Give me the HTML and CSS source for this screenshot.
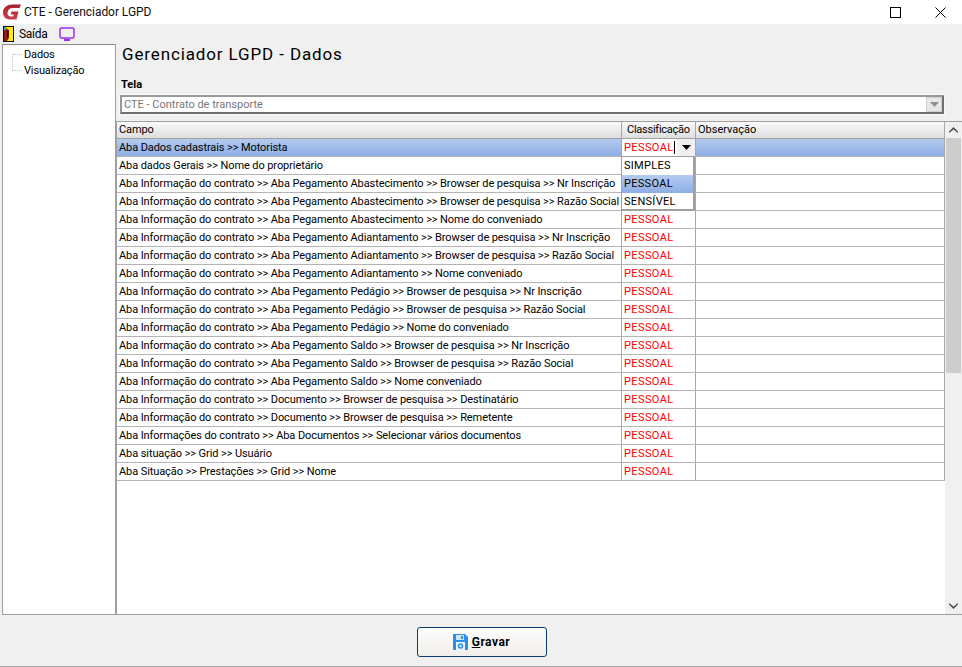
FILE: index.html
```html
<!DOCTYPE html>
<html lang="pt-BR">
<head>
<meta charset="utf-8">
<title>CTE - Gerenciador LGPD</title>
<link rel="stylesheet" href="styles.css">
</head>
<body>
<div class="window">
  <header class="titlebar">
    <svg class="app-logo" width="18" height="16" viewBox="0 0 18 16"><defs><linearGradient id="lg" x1="0" y1="0" x2="0" y2="1"><stop offset="0" stop-color="#a81e2a"/><stop offset="1" stop-color="#c9444c"/></linearGradient></defs><path d="M18 .500H9.500C4 .500 0 3.700 0 8.500 0 13 3 15.500 7.500 15.500h6L15.500 7.500H8.500L7.700 10.500h3l-.5 2H8c-2.300 0-3.700-1.500-3.500-3.800C4.800 5.700 7 4 9.500 4H16.500z" fill="url(#lg)"/></svg>
    <span class="title-text">CTE - Gerenciador LGPD</span>
    <div class="win-controls">
      <svg class="win-max" width="11" height="11" viewBox="0 0 11 11"><rect x=".5" y=".5" width="10" height="10" fill="none" stroke="#000"/></svg>
      <svg class="win-close" width="11" height="11" viewBox="0 0 11 11"><path d="M.5.500l10 10M10.500.500l-10 10" stroke="#000" fill="none"/></svg>
    </div>
  </header>
  <nav class="toolbar">
    <svg class="ico-exit" width="11" height="16" viewBox="0 0 11 16"><rect width="11" height="16" fill="#1a0a0a"/><rect x="1" y="1" width="9" height="14" fill="#ffee00"/><path d="M1 1h2v1l3 2v8l-2 3H1z" fill="#8a1c1c"/><rect x="1" y="1" width="2" height="3" fill="#20b8d8"/><path d="M4 5h1.500v5L4 12z" fill="#1a0a0a"/></svg>
    <span class="tool-label">Saída</span>
    <svg class="ico-screen" width="16" height="14" viewBox="0 0 16 14"><rect x="1" y="1" width="14" height="10" rx="1.500" fill="none" stroke="#9a2ee6" stroke-width="1.500"/><rect x="5" y="12" width="6" height="2" fill="#9a2ee6"/></svg>
  </nav>
  <div class="main">
    <aside class="tree">
      <div class="tree-guide"></div>
      <div class="tree-item">Dados</div>
      <div class="tree-item">Visualização</div>
    </aside>
    <section class="content">
      <h1 class="page-title">Gerenciador LGPD - Dados</h1>
      <label class="field-label">Tela</label>
      <div class="combo">
        <span class="combo-text">CTE - Contrato de transporte</span>
        <span class="combo-btn"><svg width="9" height="5" viewBox="0 0 9 5"><path d="M0 0h9L4.500 5z" fill="#8f8f8f"/></svg></span>
      </div>
      <div class="grid-wrap">
        <div class="grid">
          <div class="row head"><div class="c1">Campo</div><div class="c2">Classificação</div><div class="c3">Observação</div></div>
          <div class="row selected"><div class="c1">Aba Dados cadastrais &gt;&gt; Motorista</div><div class="c2 red editing"><span>PESSOAL</span><i class="caret"></i><span class="drop-btn"><svg width="9" height="5" viewBox="0 0 9 5"><path d="M0 0h9L4.500 5z" fill="#000"/></svg></span></div><div class="c3"></div></div>
          <div class="row"><div class="c1">Aba dados Gerais &gt;&gt; Nome do proprietário</div><div class="c2 red"></div><div class="c3"></div></div>
          <div class="row"><div class="c1">Aba Informação do contrato &gt;&gt; Aba Pegamento Abastecimento &gt;&gt; Browser de pesquisa &gt;&gt; Nr Inscrição</div><div class="c2 red"></div><div class="c3"></div></div>
          <div class="row"><div class="c1">Aba Informação do contrato &gt;&gt; Aba Pegamento Abastecimento &gt;&gt; Browser de pesquisa &gt;&gt; Razão Social</div><div class="c2 red"></div><div class="c3"></div></div>
          <div class="row"><div class="c1">Aba Informação do contrato &gt;&gt; Aba Pegamento Abastecimento &gt;&gt; Nome do conveniado</div><div class="c2 red">PESSOAL</div><div class="c3"></div></div>
          <div class="row"><div class="c1">Aba Informação do contrato &gt;&gt; Aba Pegamento Adiantamento &gt;&gt; Browser de pesquisa &gt;&gt; Nr Inscrição</div><div class="c2 red">PESSOAL</div><div class="c3"></div></div>
          <div class="row"><div class="c1">Aba Informação do contrato &gt;&gt; Aba Pegamento Adiantamento &gt;&gt; Browser de pesquisa &gt;&gt; Razão Social</div><div class="c2 red">PESSOAL</div><div class="c3"></div></div>
          <div class="row"><div class="c1">Aba Informação do contrato &gt;&gt; Aba Pegamento Adiantamento &gt;&gt; Nome conveniado</div><div class="c2 red">PESSOAL</div><div class="c3"></div></div>
          <div class="row"><div class="c1">Aba Informação do contrato &gt;&gt; Aba Pegamento Pedágio &gt;&gt; Browser de pesquisa &gt;&gt; Nr Inscrição</div><div class="c2 red">PESSOAL</div><div class="c3"></div></div>
          <div class="row"><div class="c1">Aba Informação do contrato &gt;&gt; Aba Pegamento Pedágio &gt;&gt; Browser de pesquisa &gt;&gt; Razão Social</div><div class="c2 red">PESSOAL</div><div class="c3"></div></div>
          <div class="row"><div class="c1">Aba Informação do contrato &gt;&gt; Aba Pegamento Pedágio &gt;&gt; Nome do conveniado</div><div class="c2 red">PESSOAL</div><div class="c3"></div></div>
          <div class="row"><div class="c1">Aba Informação do contrato &gt;&gt; Aba Pegamento Saldo &gt;&gt; Browser de pesquisa &gt;&gt; Nr Inscrição</div><div class="c2 red">PESSOAL</div><div class="c3"></div></div>
          <div class="row"><div class="c1">Aba Informação do contrato &gt;&gt; Aba Pegamento Saldo &gt;&gt; Browser de pesquisa &gt;&gt; Razão Social</div><div class="c2 red">PESSOAL</div><div class="c3"></div></div>
          <div class="row"><div class="c1">Aba Informação do contrato &gt;&gt; Aba Pegamento Saldo &gt;&gt; Nome conveniado</div><div class="c2 red">PESSOAL</div><div class="c3"></div></div>
          <div class="row"><div class="c1">Aba Informação do contrato &gt;&gt; Documento &gt;&gt; Browser de pesquisa &gt;&gt; Destinatário</div><div class="c2 red">PESSOAL</div><div class="c3"></div></div>
          <div class="row"><div class="c1">Aba Informação do contrato &gt;&gt; Documento &gt;&gt; Browser de pesquisa &gt;&gt; Remetente</div><div class="c2 red">PESSOAL</div><div class="c3"></div></div>
          <div class="row"><div class="c1">Aba Informações do contrato &gt;&gt; Aba Documentos &gt;&gt; Selecionar vários documentos</div><div class="c2 red">PESSOAL</div><div class="c3"></div></div>
          <div class="row"><div class="c1">Aba situação &gt;&gt; Grid &gt;&gt; Usuário</div><div class="c2 red">PESSOAL</div><div class="c3"></div></div>
          <div class="row"><div class="c1">Aba Situação &gt;&gt; Prestações &gt;&gt; Grid &gt;&gt; Nome</div><div class="c2 red">PESSOAL</div><div class="c3"></div></div>
        </div>
        <div class="dropdown">
          <div class="opt">SIMPLES</div>
          <div class="opt active">PESSOAL</div>
          <div class="opt">SENSÍVEL</div>
        </div>
        <div class="scrollbar">
          <svg class="arrow" width="9" height="6" viewBox="0 0 9 6"><path d="M0 4.500L4.500 0 9 4.500V6L4.500 2.500 0 6z" fill="#505050"/></svg>
          <div class="thumb"></div>
          <svg class="arrow" width="9" height="6" viewBox="0 0 9 6"><path d="M0 0L4.500 3.500 9 0V1.500L4.500 6 0 1.500z" fill="#505050"/></svg>
        </div>
      </div>
    </section>
  </div>
  <footer class="footer">
    <button class="save-btn">
      <svg width="15" height="16" viewBox="0 0 15 16"><path d="M1 0h11l3 3v12a1 1 0 0 1-1 1H1a1 1 0 0 1-1-1V1a1 1 0 0 1 1-1z" fill="#2a8fe8"/><rect x="3" y="1" width="8" height="5" fill="#cfe6fa"/><rect x="8" y="2" width="2" height="3" fill="#2a8fe8"/><rect x="3" y="8" width="9" height="8" fill="#e9f4fd"/><circle cx="7.500" cy="12" r="2" fill="none" stroke="#2a8fe8" stroke-width="1.500"/></svg>
      <span class="save-label"><u>G</u>ravar</span>
    </button>
  </footer>
</div>
</body>
</html>
```
FILE: styles.css
```css
* { box-sizing: border-box; }
html, body { margin: 0; padding: 0; }
body { font-family: Roboto, "Liberation Sans", Arial, sans-serif; font-size: 11px; color: #000; background: #f0f0f0; overflow: hidden; }
.window { width: 962px; height: 667px; display: flex; flex-direction: column; background: #f0f0f0; }
.titlebar { height: 24px; flex: none; background: #fff; display: flex; align-items: center; padding-left: 3px; }
.app-logo { flex: none; }
.title-text { margin-left: 3px; font-size: 12px; letter-spacing: -.05px; color: #111; }
.win-controls { margin-left: auto; display: flex; align-items: center; gap: 34px; padding-right: 16px; }
.win-controls svg { display: block; }
.toolbar { height: 20px; flex: none; display: flex; align-items: center; padding-left: 3px; background: #f0f0f0; }
.tool-label { margin-left: 5px; font-size: 12px; letter-spacing: -.3px; }
.ico-screen { margin-left: 12px; }
.main { flex: 1; display: flex; min-height: 0; }
.tree { width: 114px; flex: none; margin-left: 2px; background: #fff; border: 1px solid #a0a0a0; border-top: 1px solid #8a8a8a; padding-top: 3px; position: relative; }
.tree-item { height: 16px; line-height: 14px; padding-left: 21px; font-size: 11px; letter-spacing: -.15px; }
.tree-guide { position: absolute; left: 9px; top: 9px; width: 10px; height: 17px; border-left: 1px dotted #c0c0c0; border-top: 1px dotted #c0c0c0; border-bottom: 1px dotted #c0c0c0; }
.content { flex: 1; min-width: 0; display: flex; flex-direction: column; }
.page-title { margin: 0 0 0 6px; font-size: 17px; font-weight: normal; height: 24px; line-height: 20px; letter-spacing: .87px; }
.field-label { margin: 10px 0 0 5px; font-weight: bold; font-size: 11px; height: 14px; line-height: 14px; }
.combo { margin: 3px 0 0 4px; height: 19px; width: 824px; background: #fff; border: 2px solid #999; border-right-color: #707070; border-bottom-color: #707070; display: flex; align-items: center; outline: 1px solid #fafafa; }
.combo-text { color: #777; padding-left: 2px; flex: 1; }
.combo-btn { width: 16px; height: 15px; background: #e8e8e8; border: 1px solid #d0d0d0; display: flex; align-items: center; justify-content: center; }
.grid-wrap { flex: 1; min-height: 0; margin-top: 7px; background: #fff; border: 1px solid #a0a0a0; border-right: 0; position: relative; }
.grid { width: 828px; }
.row { display: grid; grid-template-columns: 505px 74px 249px; height: 18px; line-height: 17px; border-bottom: 1px solid #b4b4b4; background: #fff; }
.row > div { border-right: 1px solid #a8a8a8; padding-left: 2px; white-space: nowrap; overflow: hidden; }
.c1 { letter-spacing: -.09px; }
.head { height: 17px; line-height: 15px; background: linear-gradient(#fafafa, #dedede); border-bottom: 1px solid #a0a0a0; }
.head .c2 { padding-left: 5px; letter-spacing: -.25px; }
.selected { background: linear-gradient(#b4cbf0, #8eaee4); }
.red { color: #f00; letter-spacing: .4px; }
.editing { background: #fff; display: flex; align-items: center; }
.caret { width: 1px; height: 13px; background: #000; flex: none; }
.drop-btn { margin-left: auto; width: 18px; height: 17px; background: #f0f0f0; display: flex; align-items: center; justify-content: center; }
.dropdown { position: absolute; left: 504px; top: 34px; width: 74px; height: 55px; background: #fff; border: 1px solid #a0a0a0; border-right-width: 2px; border-bottom-width: 2px; }
.opt { height: 18px; line-height: 17px; padding-left: 2px; letter-spacing: .3px; }
.opt.active { background: linear-gradient(#b4cbf0, #8eaee4); }
.scrollbar { position: absolute; right: 0; top: 0; bottom: 0; width: 17px; background: #f0f0f0; display: flex; flex-direction: column; align-items: center; }
.arrow { flex: none; margin: 5px 0; }
.thumb { width: 15px; height: 235px; background: #cdcdcd; margin-bottom: auto; }
.footer { height: 52px; flex: none; display: flex; align-items: flex-start; justify-content: center; padding-top: 12px; background: #f0f0f0; border-bottom: 1px solid #a8a8a8; }
.save-btn { width: 130px; height: 30px; margin-left: 1px; background: linear-gradient(#fdfdfd, #f1eeea); border: 1px solid #0b3c73; border-radius: 3px; display: flex; align-items: center; justify-content: center; gap: 4px; font: bold 12px Roboto, "Liberation Sans", Arial, sans-serif; padding: 0; }
.save-label { letter-spacing: .5px; }
```
